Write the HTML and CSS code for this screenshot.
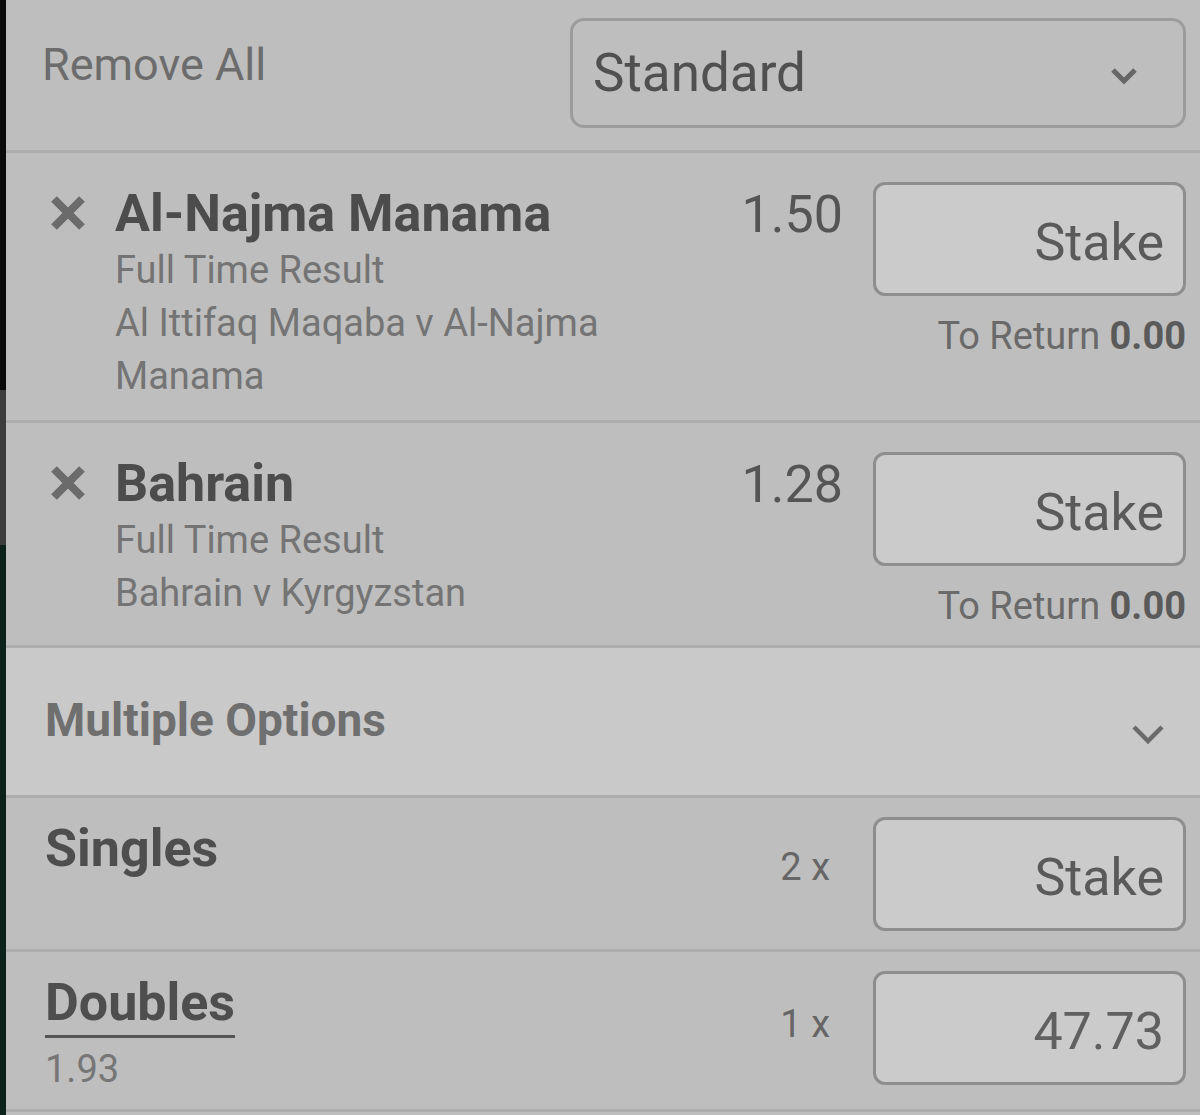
FILE: index.html
```html
<!DOCTYPE html>
<html lang="en">
<head>
    <meta charset="UTF-8">
    <meta name="viewport" content="width=device-width, initial-scale=1.0">
    <title>Bet Slip</title>
    <link rel="stylesheet" href="styles.css">
</head>
<body>
    <div class="screen">
        <div class="edge"></div>

        <div class="slip">
            <div class="slip-head">
                <a href="#" class="remove-all">Remove All</a>
                <div class="bet-type">
                    <span>Standard</span>
                    <svg class="chevron-sm" width="28" height="18" viewBox="0 0 28 18">
                        <polyline points="3,3 14,14 25,3" fill="none" stroke="#666" stroke-width="5"/>
                    </svg>
                </div>
            </div>

            <div class="bet">
                <div class="bet-remove">
                    <svg width="38" height="38" viewBox="0 0 38 38">
                        <path d="M5 5 L33 33 M33 5 L5 33" stroke="#6b6b6b" stroke-width="8"/>
                    </svg>
                </div>
                <div class="bet-info">
                    <div class="bet-name">Al-Najma Manama</div>
                    <div class="bet-line">Full Time Result</div>
                    <div class="bet-line">Al Ittifaq Maqaba v Al-Najma Manama</div>
                </div>
                <div class="bet-odds">1.50</div>
                <div class="bet-stake">
                    <div class="stake-box">Stake</div>
                    <div class="to-return">To Return <b>0.00</b></div>
                </div>
            </div>

            <div class="bet">
                <div class="bet-remove">
                    <svg width="38" height="38" viewBox="0 0 38 38">
                        <path d="M5 5 L33 33 M33 5 L5 33" stroke="#6b6b6b" stroke-width="8"/>
                    </svg>
                </div>
                <div class="bet-info">
                    <div class="bet-name">Bahrain</div>
                    <div class="bet-line">Full Time Result</div>
                    <div class="bet-line">Bahrain v Kyrgyzstan</div>
                </div>
                <div class="bet-odds">1.28</div>
                <div class="bet-stake">
                    <div class="stake-box">Stake</div>
                    <div class="to-return">To Return <b>0.00</b></div>
                </div>
            </div>

            <div class="multi-toggle">
                <span>Multiple Options</span>
                <svg class="chevron" width="32" height="19" viewBox="0 0 32 19">
                    <polyline points="2,2 16,16 30,2" fill="none" stroke="#6a6a6a" stroke-width="4.5"/>
                </svg>
            </div>

            <div class="multi">
                <div class="multi-label">
                    <div class="multi-name">Singles</div>
                </div>
                <div class="multi-count">2 x</div>
                <div class="stake-box">Stake</div>
            </div>

            <div class="multi">
                <div class="multi-label">
                    <div class="multi-name underlined">Doubles</div>
                    <div class="multi-odds">1.93</div>
                </div>
                <div class="multi-count">1 x</div>
                <div class="stake-box filled">47.73</div>
            </div>
        </div>
    </div>
</body>
</html>
```

FILE: styles.css
```css
body {
    margin: 0;
    font-family: Roboto, 'Liberation Sans', sans-serif;
    background-color: #bebebe;
    color: #4e4e4e;
}

.screen {
    display: flex;
    min-height: 1115px;
}

/* strip of the app behind the slip */
.edge {
    width: 6px;
    flex-shrink: 0;
    background: linear-gradient(to bottom, #0a0a0a 0, #0a0a0a 390px, #3c3c3c 390px, #3c3c3c 545px, #0c2119 545px);
}

.slip {
    flex-grow: 1;
    background: #bebebe;
}

/* header: remove all + bet type select */
.slip-head {
    display: flex;
    justify-content: space-between;
    align-items: flex-start;
    height: 153px;
    padding: 18px 14px 0 36px;
    box-sizing: border-box;
    border-bottom: 3px solid #adadad;
}

.remove-all {
    margin-top: 21px;
    font-size: 45px;
    line-height: 52px;
    color: #6c6c6c;
    text-decoration: none;
}

.bet-type {
    width: 616px;
    height: 110px;
    box-sizing: border-box;
    border: 3px solid #9c9c9c;
    border-radius: 14px;
    display: flex;
    align-items: center;
    justify-content: space-between;
    padding: 0 45px 0 20px;
    font-size: 53px;
    color: #505050;
}

.chevron-sm {
    margin-top: 6px;
}

/* single selections */
.bet {
    display: flex;
    align-items: flex-start;
    padding: 29px 14px 17px 45px;
    border-bottom: 3px solid #adadad;
}

.bet-remove {
    width: 64px;
    flex-shrink: 0;
    padding-top: 12px;
}

.bet-remove svg {
    display: block;
    margin-left: -2px;
}

.bet-info {
    flex-grow: 1;
    margin-top: 2px;
}

.bet-name {
    font-size: 52px;
    font-weight: 700;
    line-height: 60px;
    color: #4c4c4c;
}

.bet-line {
    font-size: 38px;
    line-height: 53px;
    color: #747474;
}

.bet-odds {
    margin-top: 3px;
    margin-right: 30px;
    font-size: 52px;
    line-height: 60px;
    color: #555;
}

.bet-stake {
    width: 313px;
    flex-shrink: 0;
}

.stake-box {
    width: 313px;
    height: 114px;
    flex-shrink: 0;
    box-sizing: border-box;
    background: #cbcbcb;
    border: 3px solid #8e8e8e;
    border-radius: 12px;
    display: flex;
    align-items: center;
    justify-content: flex-end;
    padding: 6px 19px 0 0;
    font-size: 52px;
    color: #5a5a5a;
}

.stake-box.filled {
    color: #606060;
}

.to-return {
    margin-top: 18px;
    text-align: right;
    font-size: 38px;
    line-height: 44px;
    color: #6a6a6a;
}

.to-return b {
    color: #5a5a5a;
}

/* multiples */
.multi-toggle {
    height: 150px;
    box-sizing: border-box;
    display: flex;
    align-items: center;
    justify-content: space-between;
    padding: 0 36px 0 39px;
    background: #c9c9c9;
    border-bottom: 3px solid #adadad;
    font-size: 46px;
    font-weight: 700;
    color: #6f6f6f;
}

.multi-toggle span {
    margin-top: -4px;
}

.chevron {
    margin-top: 26px;
}

.multi {
    display: flex;
    align-items: flex-start;
    padding: 19px 14px 18px 39px;
    border-bottom: 3px solid #adadad;
}

.multi-label {
    flex-grow: 1;
    margin-top: 3px;
}

.multi-name {
    display: inline-block;
    font-size: 52px;
    font-weight: 700;
    line-height: 58px;
    color: #4e4e4e;
}

.multi-name.underlined {
    padding-bottom: 3px;
    border-bottom: 3px solid #555;
}

.multi-odds {
    margin-top: 9px;
    font-size: 38px;
    line-height: 44px;
    color: #767676;
}

.multi-count {
    align-self: center;
    margin: 0 43px 15px 0;
    font-size: 38px;
    line-height: 44px;
    color: #666;
}
```
